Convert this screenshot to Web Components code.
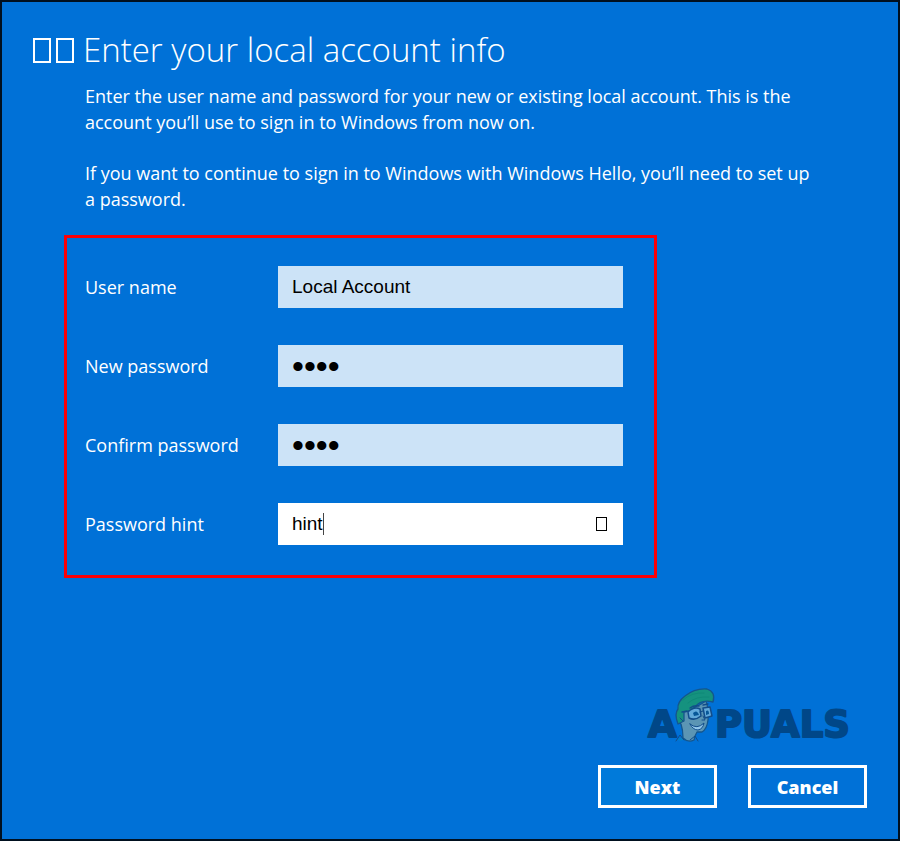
<!DOCTYPE html>
<html lang="en">
<head>
<meta charset="utf-8">
<title>Enter your local account info</title>
<style>
  body { margin: 0; background: #000; font-family: "Open Sans", "Noto Sans", sans-serif; }
</style>
</head>
<body>
<account-dialog></account-dialog>

<template id="dialog-tpl">
  <style>
    :host { display: flex; flex-direction: column; box-sizing: border-box; min-height: 100vh;
      border: 2px solid #00101f; background: #0071d7; color: #fff; padding: 24px 31px 31px;
      font-size: 18px; line-height: 26px; }
    header { display: flex; align-items: center; gap: 9px; }
    h1 { margin: 0; font-weight: 300; font-size: 33px; line-height: 48px; }
    .intro { margin: 9px 48px 0 52px; display: grid; gap: 25px; }
    p { margin: 0; }
    footer { margin-top: auto; display: grid; justify-items: end; gap: 16px; }
    .actions { display: flex; gap: 31px; }
    brand-mark { margin-right: 8px; }
  </style>
  <header><back-button></back-button><h1>Enter your local account info</h1></header>
  <div class="intro">
    <p>Enter the user name and password for your new or existing local account. This is the account you’ll use to sign in to Windows from now on.</p>
    <p>If you want to continue to sign in to Windows with Windows Hello, you’ll need to set up a&nbsp;password.</p>
  </div>
  <field-group>
    <form-field label="User name" value="Local Account"></form-field>
    <form-field label="New password" type="password" value="1234"></form-field>
    <form-field label="Confirm password" type="password" value="1234"></form-field>
    <form-field label="Password hint" value="hint" active></form-field>
  </field-group>
  <footer>
    <brand-mark></brand-mark>
    <div class="actions">
      <action-button primary>Next</action-button>
      <action-button>Cancel</action-button>
    </div>
  </footer>
</template>

<template id="back-tpl">
  <style>
    :host { display: block; }
    button { display: flex; gap: 5px; padding: 0; border: 0; background: none; }
    i { box-sizing: border-box; width: 18px; height: 25px; border: 2px solid #fff; }
  </style>
  <button type="button" aria-label="Back"><i></i><i></i></button>
</template>

<template id="group-tpl">
  <style>
    :host { display: grid; grid-template-columns: minmax(0, 1fr); gap: 37px; box-sizing: border-box; max-width: 593px;
      margin: 23px 0 20px 31px; padding: 28px 31px 30px 18px; border: 3px solid #fc0008; }
  </style>
  <slot></slot>
</template>

<template id="field-tpl">
  <style>
    :host { display: grid; grid-template-columns: 193px minmax(0, 1fr); align-items: center; }
    .box { position: relative; display: flex; align-items: center; height: 42px; background: #cce3f7; }
    :host([active]) .box { background: #fff; }
    input { flex: 1; width: 100%; min-width: 0; height: 100%; box-sizing: border-box; border: 0; outline: 0; padding: 0 14px;
      background: none; color: #000; font: 19px "Liberation Sans", Arial, sans-serif; }
    input[type=password] { font-size: 34px; }
    .caret, button { display: none; }
    :host([active]) .caret { display: block; position: absolute; left: 45px; top: 10px; width: 1px; height: 22px; background: #444; }
    :host([active]) button { display: block; box-sizing: border-box; width: 11px; height: 14px; margin-right: 16px;
      padding: 0; border: 1px solid #000; background: none; }
  </style>
  <label for="in"></label>
  <div class="box"><input id="in"><span class="caret"></span><button type="button" aria-label="Clear"></button></div>
</template>

<template id="action-tpl">
  <style>
    :host { display: block; }
    button { box-sizing: border-box; width: 119px; height: 43px; padding: 0; border: 3px solid #fff;
      background: transparent; color: #fff; font: 800 18px/24px "Open Sans", "Noto Sans", sans-serif; }
    :host([primary]) button { background: #007ada; }
  </style>
  <button type="button"><slot></slot></button>
</template>

<template id="brand-tpl">
  <style>
    :host { display: block; }
    svg { display: block; width: 212px; height: 62px; overflow: visible; }
    text { font: bold 37px "DejaVu Sans", sans-serif; fill: #004788; stroke: #004788; stroke-width: 2px; stroke-linejoin: round; }
  </style>
  <svg viewBox="0 0 212 62" role="img" aria-label="Appuals">
    <text x="1" y="50">A</text>
    <text x="68" y="50">PUALS</text>
    <g stroke-linejoin="round" stroke-linecap="round">
      <path d="M39 29L38 37Q37 42 40 44Q43 48 44 54L36 53Q32 55 30 52L44 48Z" fill="#0080c8"/>
      <path d="M37 23Q49 21 59 14Q62 23 61 33Q60 42 55 45L50 45Q48 48 47 53Q41 56 36 51Q36 43 34 37Q29 34 32 30L35 31Z" fill="#5b95b4" stroke="#14568d" stroke-width="1.3"/>
      <path d="M31 37Q27 27 31 22Q30 15 38 9Q48 1 60 2Q69 5 66 15Q54 12 48 20Q42 25 37 25L37 34Z" fill="#15927f" stroke="#14568d" stroke-width="1.3"/>
      <path d="M36 13Q45 5 57 6M41 16Q49 9 62 10" stroke="#0f8a78" fill="none"/>
      <path d="M41 25Q47 19 53 22L54 29Q48 34 42 31ZM56 21L63 20L65 29L58 31Z" fill="#62a9da" stroke="#124d8a" stroke-width="1.5"/>
      <path d="M40 24L35 25M53 25L56 24M43 21Q47 18 52 19M56 18L61 17" stroke="#124d8a" stroke-width="1.3" fill="none"/>
      <path d="M46 26Q50 22 52 28L47 29ZM59 24Q62 22 62 27L59 28Z" fill="#075798"/>
      <path d="M43 37Q50 43 57 36Q56 42 51 43Q46 43 43 37Z" fill="#91c6e9" stroke="#124d8a"/>
      <path d="M56 29L58 33L55 33M33 31L36 34M29 54L33 48L37 53M43 53L48 49L51 54" fill="none" stroke="#124d8a"/>
    </g>
  </svg>
</template>

<script>
  const base = (id) => class extends HTMLElement {
    constructor() {
      super();
      this.attachShadow({ mode: "open" }).append(document.getElementById(id).content.cloneNode(true));
    }
  };
  customElements.define("back-button", class extends base("back-tpl") {});
  customElements.define("field-group", class extends base("group-tpl") {});
  customElements.define("action-button", class extends base("action-tpl") {});
  customElements.define("brand-mark", class extends base("brand-tpl") {});
  customElements.define("form-field", class extends base("field-tpl") {
    connectedCallback() {
      const input = this.shadowRoot.querySelector("input");
      this.shadowRoot.querySelector("label").textContent = this.getAttribute("label");
      input.type = this.getAttribute("type") || "text";
      input.value = this.getAttribute("value") || "";
    }
  });
  customElements.define("account-dialog", class extends base("dialog-tpl") {});
</script>
</body>
</html>
